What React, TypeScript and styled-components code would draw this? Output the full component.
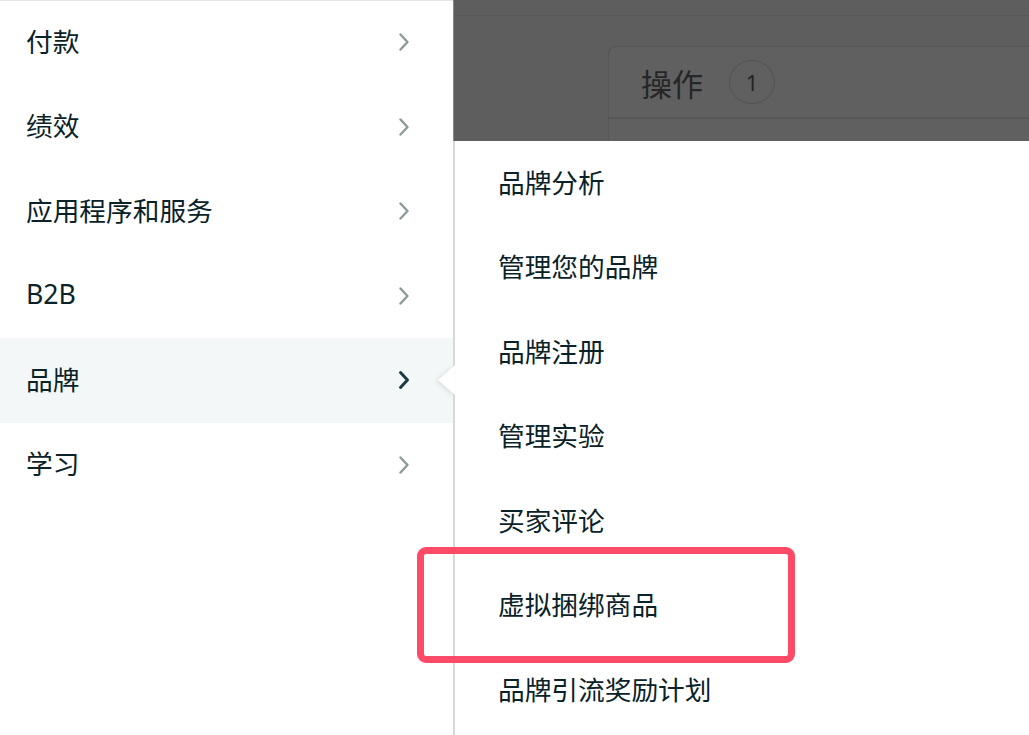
import { createGlobalStyle, styled } from 'styled-components';

const GlobalStyle = createGlobalStyle`
  html, body {
    margin: 0;
    padding: 0;
    background: #ffffff;
  }
  body {
    font-family: "Noto Sans", "Noto Sans CJK SC", sans-serif;
    overflow: hidden;
  }
`;

const mainItems = ['付款', '绩效', '应用程序和服务', 'B2B', '品牌', '学习'];
const activeMain = '品牌';

const subItems = [
  '品牌分析',
  '管理您的品牌',
  '品牌注册',
  '管理实验',
  '买家评论',
  '虚拟捆绑商品',
  '品牌引流奖励计划',
];
const markedSub = '虚拟捆绑商品';

const Chevron = ({ active }: { active: boolean }) => (
  <SChevron viewBox="0 0 12 20" $active={active}>
    <polyline points="2.5,2.5 9.5,10 2.5,17.5" />
  </SChevron>
);

const App = () => {
  return (
    <>
      <GlobalStyle />
      <SLayout>
        <SMainMenu>
          {mainItems.map(item => (
            <SMainRow key={item} $active={item === activeMain}>
              <SLabel>{item}</SLabel>
              <Chevron active={item === activeMain} />
            </SMainRow>
          ))}
        </SMainMenu>
        <SRightSide>
          <SOverlay>
            <STopStrip />
            <SCard>
              <SCardHeader>
                <span>操作</span>
                <SCount>1</SCount>
              </SCardHeader>
            </SCard>
          </SOverlay>
          <SSubMenu>
            <SPointer />
            {subItems.map(item => (
              <SSubRow key={item} $marked={item === markedSub}>
                <SLabel>{item}</SLabel>
              </SSubRow>
            ))}
          </SSubMenu>
        </SRightSide>
      </SLayout>
    </>
  );
};

const SLayout = styled.div`
  display: flex;
  width: 1029px;
  height: 735px;
  overflow: hidden;
  background: #ffffff;
  color: #0a2228;
`;

const SMainMenu = styled.nav`
  width: 453px;
  flex-shrink: 0;
  border-top: 1px solid #e3e6e6;
  box-sizing: border-box;
`;

const SLabel = styled.span`
  position: relative;
  top: -2px;
`;

const SMainRow = styled.div<{ $active: boolean }>`
  display: flex;
  align-items: center;
  justify-content: space-between;
  height: 84.5px;
  padding: 0 43px 0 26px;
  font-size: 26.7px;
  background: ${props => (props.$active ? '#f3f7f7' : 'transparent')};
  &:first-child {
    margin-top: -1px;
  }
`;

const SChevron = styled.svg<{ $active: boolean }>`
  width: 12px;
  height: 20px;
  fill: none;
  stroke: ${props => (props.$active ? '#1c3a40' : '#8d9a9a')};
  stroke-width: ${props => (props.$active ? 3 : 2.4)};
  stroke-linecap: round;
  stroke-linejoin: round;
`;

const SRightSide = styled.div`
  flex: 1;
  display: flex;
  flex-direction: column;
  min-width: 0;
`;

const SOverlay = styled.div`
  height: 141px;
  flex-shrink: 0;
  background: #5e5e5e;
  border-left: 1px solid #8a8a8a;
  overflow: hidden;
`;

const STopStrip = styled.div`
  height: 15px;
  border-bottom: 1px solid #585858;
`;

const SCard = styled.div`
  margin: 30px 0 0 154px;
  height: 200px;
  border: 1px solid #565656;
  border-right: none;
  border-radius: 8px 0 0 0;
  background: #606060;
`;

const SCardHeader = styled.div`
  display: flex;
  align-items: center;
  gap: 26px;
  height: 70px;
  padding-left: 32px;
  border-bottom: 2px solid #575757;
  font-size: 31px;
  color: #262626;
`;

const SCount = styled.span`
  display: flex;
  align-items: center;
  justify-content: center;
  width: 44px;
  height: 42px;
  border: 1px solid #545454;
  border-radius: 50%;
  font-size: 22px;
  color: #242424;
`;

const SSubMenu = styled.div`
  position: relative;
  flex: 1;
  border-left: 2px solid #d5d9d9;
`;

const SPointer = styled.div`
  position: absolute;
  left: -17px;
  top: 224px;
  width: 0;
  height: 0;
  border-top: 15px solid transparent;
  border-bottom: 15px solid transparent;
  border-right: 17px solid #ffffff;
  filter: drop-shadow(-2px 1px 2px rgba(0, 0, 0, 0.1));
  z-index: 1;
`;

const SSubRow = styled.div<{ $marked: boolean }>`
  position: relative;
  display: flex;
  align-items: center;
  height: 84.5px;
  padding-left: 43px;
  font-size: 26.7px;

  ${props =>
    props.$marked &&
    `
    &::after {
      content: '';
      position: absolute;
      top: -17px;
      bottom: -15px;
      left: -38px;
      width: 378px;
      box-sizing: border-box;
      border: 7px solid #fd4b67;
      border-radius: 9px;
      z-index: 2;
    }
  `}
`;

export default App;
